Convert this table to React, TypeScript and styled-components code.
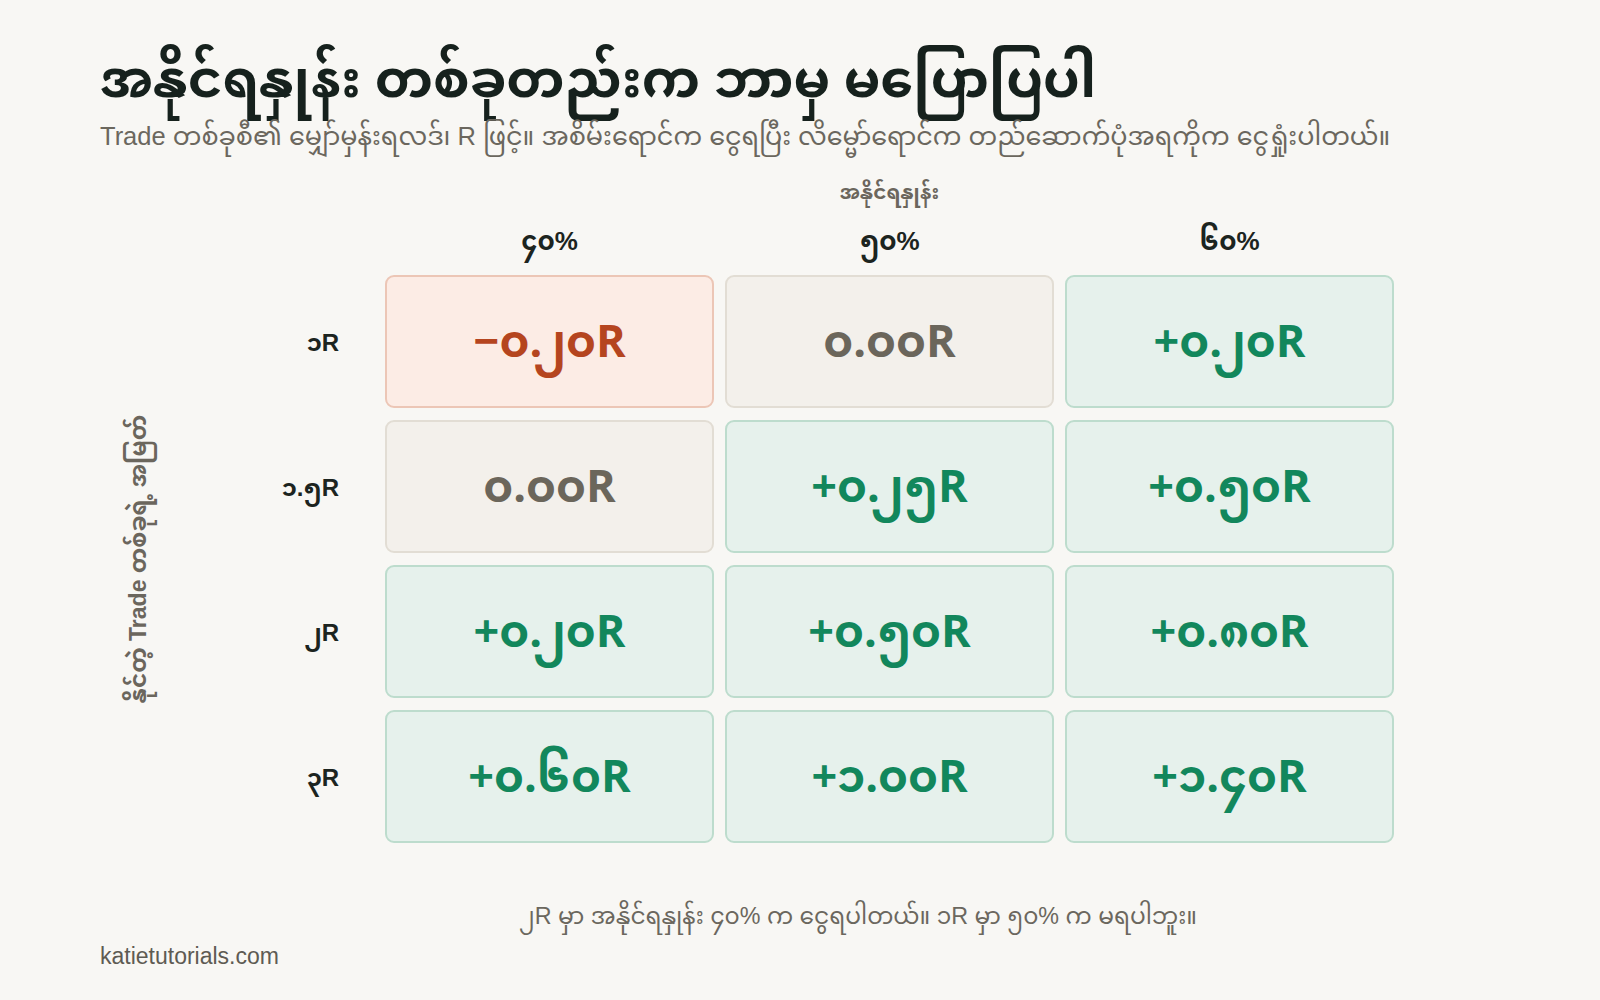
import React from "react";
import styled, { createGlobalStyle } from "styled-components";

const MY = `"Noto Sans Myanmar", "Padauk", "Myanmar Text", "Myanmar3", "Noto Sans", "Liberation Sans", sans-serif`;
const MIXED = `"Liberation Sans", "Noto Sans Myanmar", "Padauk", "Myanmar Text", "Noto Sans", sans-serif`;

const Global = createGlobalStyle`
  html, body { margin: 0; padding: 0; background: #f8f7f4; }
  body { font-family: ${MIXED}; }
`;

const Page = styled.div`
  width: 1600px;
  height: 1000px;
  box-sizing: border-box;
  padding: 46px 100px 0 100px;
  display: flex;
  flex-direction: column;
  background: #f8f7f4;
`;

const Title = styled.h1`
  margin: 0;
  font-family: ${MY};
  font-weight: 700;
  font-size: 52.5px;
  line-height: 78px;
  color: #16211d;
`;

const Subtitle = styled.p`
  margin: -6px 0 0 0;
  font-family: ${MIXED};
  font-size: 25.5px;
  line-height: 36px;
  color: #6b675e;
`;

const Chart = styled.div`
  margin-top: 26px;
  display: grid;
  grid-template-columns: 82px 181px 329px 329px 329px;
  grid-template-rows: 28px 43px repeat(4, 133px);
  column-gap: 11px;
  row-gap: 12px;
`;

const AxisTitle = styled.div`
  grid-column: 3 / span 3;
  grid-row: 1;
  text-align: center;
  font-family: ${MY};
  font-weight: 700;
  font-size: 20px;
  line-height: 30px;
  color: #6b665d;
`;

const ColHead = styled.div<{ $col: number }>`
  grid-column: ${(p) => p.$col};
  grid-row: 2;
  display: flex;
  align-items: center;
  justify-content: center;
  padding-top: 4px;
  font-family: ${MIXED};
  font-weight: 700;
  font-size: 26px;
  color: #1c2420;
`;

const YAxis = styled.div`
  grid-column: 1;
  grid-row: 3 / span 4;
  display: flex;
  align-items: center;
  justify-content: center;
`;

const YAxisText = styled.div`
  transform: rotate(-90deg);
  white-space: nowrap;
  font-family: ${MIXED};
  font-weight: 700;
  font-size: 23px;
  color: #6b665d;
`;

const RowHead = styled.div<{ $row: number }>`
  grid-column: 2;
  grid-row: ${(p) => p.$row};
  display: flex;
  align-items: center;
  justify-content: flex-end;
  padding-right: 35px;
  padding-top: 8px;
  font-family: ${MIXED};
  font-weight: 700;
  font-size: 24px;
  color: #1c2420;
`;

type Tone = "neg" | "zero" | "pos";

const toneStyles: Record<Tone, { bg: string; border: string; fg: string }> = {
  neg: { bg: "#fcece5", border: "#ecc6b6", fg: "#b5451f" },
  zero: { bg: "#f3f0eb", border: "#e2ddd4", fg: "#6b665b" },
  pos: { bg: "#e6f1ec", border: "#bddccd", fg: "#12875c" },
};

const Cell = styled.div<{ $tone: Tone; $row: number; $col: number }>`
  grid-column: ${(p) => p.$col};
  grid-row: ${(p) => p.$row};
  box-sizing: border-box;
  border-radius: 9px;
  border: 2px solid ${(p) => toneStyles[p.$tone].border};
  background: ${(p) => toneStyles[p.$tone].bg};
  color: ${(p) => toneStyles[p.$tone].fg};
  display: flex;
  align-items: center;
  justify-content: center;
  padding-top: 10px;
`;

const Value = styled.span`
  font-family: ${MY};
  font-weight: 700;
  font-size: 45px;
  white-space: nowrap;
`;

const Minus = styled.span`
  font-family: "Noto Sans", "Liberation Sans", sans-serif;
`;

const Two = styled.span`
  margin-left: -9px;
`;

const renderValue = (v: string) => {
  const parts: React.ReactNode[] = [];
  let buf = "";
  Array.from(v).forEach((ch, i) => {
    if (ch === "−") {
      if (buf) parts.push(buf);
      buf = "";
      parts.push(<Minus key={i}>−</Minus>);
    } else if (ch === "၂") {
      if (buf) parts.push(buf);
      buf = "";
      parts.push(<Two key={i}>၂</Two>);
    } else {
      buf += ch;
    }
  });
  if (buf) parts.push(buf);
  return parts;
};

const Footnote = styled.p`
  margin: 57px 0 0 0;
  padding-left: 116px;
  text-align: center;
  font-family: ${MIXED};
  font-size: 23.3px;
  line-height: 32px;
  color: #6b675e;
`;

const Site = styled.div`
  margin-top: 11px;
  font-family: "Liberation Sans", sans-serif;
  font-size: 23px;
  color: #5e5b53;
`;

const cols = ["၄၀%", "၅၀%", "၆၀%"];
const rows: { label: string; cells: { v: string; t: Tone }[] }[] = [
  {
    label: "၁R",
    cells: [
      { v: "−၀.၂၀R", t: "neg" },
      { v: "၀.၀၀R", t: "zero" },
      { v: "+၀.၂၀R", t: "pos" },
    ],
  },
  {
    label: "၁.၅R",
    cells: [
      { v: "၀.၀၀R", t: "zero" },
      { v: "+၀.၂၅R", t: "pos" },
      { v: "+၀.၅၀R", t: "pos" },
    ],
  },
  {
    label: "၂R",
    cells: [
      { v: "+၀.၂၀R", t: "pos" },
      { v: "+၀.၅၀R", t: "pos" },
      { v: "+၀.၈၀R", t: "pos" },
    ],
  },
  {
    label: "၃R",
    cells: [
      { v: "+၀.၆၀R", t: "pos" },
      { v: "+၁.၀၀R", t: "pos" },
      { v: "+၁.၄၀R", t: "pos" },
    ],
  },
];

export default function App() {
  return (
    <>
      <Global />
      <Page>
        <Title>အနိုင်ရနှုန်း တစ်ခုတည်းက ဘာမှ မပြောပြပါ</Title>
        <Subtitle>
          Trade တစ်ခုစီ၏ မျှော်မှန်းရလဒ်၊ R ဖြင့်။ အစိမ်းရောင်က ငွေရပြီး လိမ္မော်ရောင်က တည်ဆောက်ပုံအရကိုက ငွေရှုံးပါတယ်။
        </Subtitle>
        <Chart>
          <AxisTitle>အနိုင်ရနှုန်း</AxisTitle>
          {cols.map((c, i) => (
            <ColHead key={c} $col={i + 3}>
              {c}
            </ColHead>
          ))}
          <YAxis>
            <YAxisText>နိုင်တဲ့ Trade တစ်ခုရဲ့ အမြတ်</YAxisText>
          </YAxis>
          {rows.map((r, ri) => (
            <React.Fragment key={r.label}>
              <RowHead $row={ri + 3}>{r.label}</RowHead>
              {r.cells.map((c, ci) => (
                <Cell key={ci} $tone={c.t} $row={ri + 3} $col={ci + 3}>
                  <Value>{renderValue(c.v)}</Value>
                </Cell>
              ))}
            </React.Fragment>
          ))}
        </Chart>
        <Footnote>၂R မှာ အနိုင်ရနှုန်း ၄၀% က ငွေရပါတယ်။ ၁R မှာ ၅၀% က မရပါဘူး။</Footnote>
        <Site>katietutorials.com</Site>
      </Page>
    </>
  );
}
